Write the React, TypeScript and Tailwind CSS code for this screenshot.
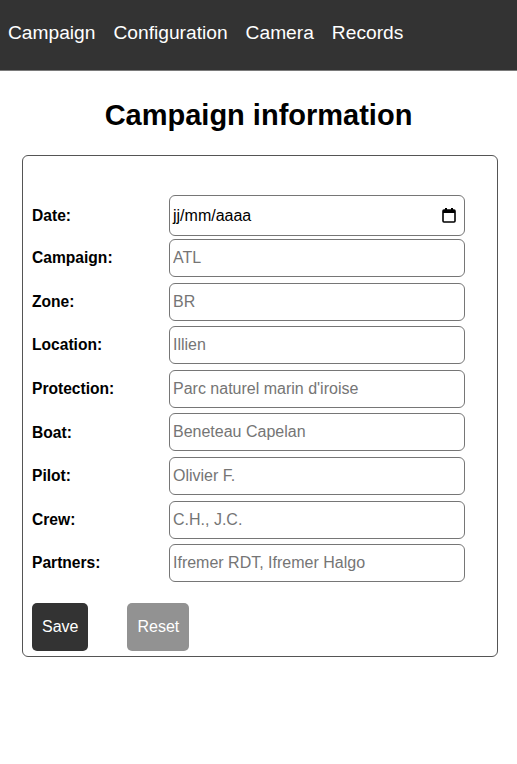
const navItems = ['Campaign', 'Configuration', 'Camera', 'Records'];

const fields = [
  { label: 'Campaign:', placeholder: 'ATL' },
  { label: 'Zone:', placeholder: 'BR' },
  { label: 'Location:', placeholder: 'Illien' },
  { label: 'Protection:', placeholder: "Parc naturel marin d'iroise" },
  { label: 'Boat:', placeholder: 'Beneteau Capelan' },
  { label: 'Pilot:', placeholder: 'Olivier F.' },
  { label: 'Crew:', placeholder: 'C.H., J.C.' },
  { label: 'Partners:', placeholder: 'Ifremer RDT, Ifremer Halgo' },
];

function CalendarIcon() {
  return (
    <svg width="14" height="15" viewBox="0 0 14 15" fill="none">
      <rect x="3" y="0" width="2" height="3" fill="#000" />
      <rect x="9" y="0" width="2" height="3" fill="#000" />
      <rect x="1" y="2" width="12" height="12" rx="1" stroke="#000" strokeWidth="1.6" fill="none" />
      <rect x="1" y="2" width="12" height="3" fill="#000" />
    </svg>
  );
}

export default function App() {
  return (
    <div className="min-h-[764px] bg-white text-black font-['Liberation_Sans',Arial,sans-serif]">
      {/* Nav */}
      <nav className="h-[71px] bg-[#333333] border-b border-[#7a7a7a] flex items-center gap-[18px] px-[8px] pb-[4px]">
        {navItems.map((item) => (
          <a key={item} className="text-white text-[19.2px] leading-none">
            {item}
          </a>
        ))}
      </nav>

      <h1 className="text-center font-bold text-[29px] leading-[34px] mt-[27px] mb-[23px]">
        Campaign information
      </h1>

      {/* Form card */}
      <div className="ml-[22px] w-[476px] border border-[#555555] rounded-[6px] pt-[39px] pb-[5px] px-[9px]">
        <div className="flex items-center mb-[3px]">
          <label className="w-[137px] font-bold text-[15.6px]">Date:</label>
          <div className="w-[296px] h-[41px] border border-[#767676] rounded-[6px] flex items-center justify-between pl-[3px] pr-[8px] text-[16px]">
            <span>jj/mm/aaaa</span>
            <CalendarIcon />
          </div>
        </div>

        {fields.map((f) => (
          <div key={f.label} className="flex items-center mb-[5.6px]">
            <label className="w-[137px] font-bold text-[15.6px]">{f.label}</label>
            <input
              type="text"
              placeholder={f.placeholder}
              className="w-[296px] h-[38px] border border-[#767676] rounded-[6px] px-[3px] text-[16px] placeholder:text-[#757575] outline-none"
            />
          </div>
        ))}

        <div className="flex gap-[39px] mt-[21px]">
          <button className="h-[48px] px-[10px] bg-[#333333] text-white text-[16px] rounded-[5px]">
            Save
          </button>
          <button className="h-[48px] px-[10px] bg-[#929292] text-white text-[16px] rounded-[5px]">
            Reset
          </button>
        </div>
      </div>
    </div>
  );
}
